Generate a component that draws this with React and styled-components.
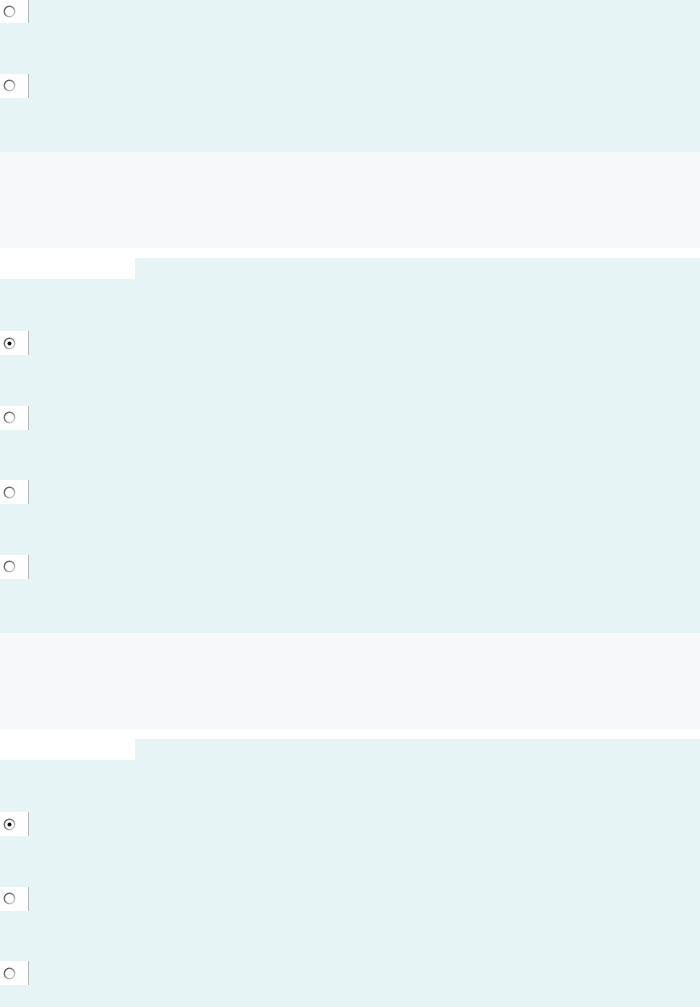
import React from 'react';
import styled, { createGlobalStyle } from 'styled-components';

const GlobalStyle = createGlobalStyle`
  html, body {
    margin: 0;
    padding: 0;
    background: #e6f4f5;
    font-family: "Liberation Sans", Arial, sans-serif;
    overflow: hidden;
  }
`;

// the screenshot is scrolled: the first row is partly above the top edge
const Page = styled.div`
  width: 700px;
  margin-top: -26px;
`;

const Section = styled.section`
  display: flex;
  flex-direction: column;
`;

const HeaderPanel = styled.div`
  height: 96px;
  background: #f7f8fa;
`;

const Spacer = styled.div`
  height: 9.5px;
  background: #ffffff;
`;

const TabBar = styled.div`
  display: flex;
  height: 21.5px;
  background: #e6f4f5;
`;

const Tab = styled.div`
  width: 135px;
  background: #ffffff;
`;

const Body = styled.div`
  display: flex;
  flex-direction: column;
  padding: ${p => (p.$first ? '0' : '27px')} 0 29px;
  background: #e6f4f5;
`;

const Row = styled.div`
  display: flex;
  align-items: center;
  height: 74.5px;
`;

const RadioBox = styled.label`
  display: flex;
  align-items: center;
  width: 25px;
  height: 24px;
  padding-left: 3px;
  background: #ffffff;
  border-right: 1px solid #b4b8b9;
`;

const Radio = ({ checked }) => (
  <svg width="13" height="13" viewBox="0 0 13 13">
    <defs>
      <linearGradient id="ring" x1="0" y1="0" x2="1" y2="1">
        <stop offset="0" stopColor="#4e4e4e" />
        <stop offset="0.5" stopColor="#8a8a8a" />
        <stop offset="1" stopColor="#e4e4e4" />
      </linearGradient>
    </defs>
    <circle cx="6.5" cy="6.5" r="5.2" fill="#ffffff" stroke="url(#ring)" strokeWidth="1.5" />
    {checked && <circle cx="6.5" cy="6.5" r="2" fill="#111111" />}
  </svg>
);

const sections = [
  { header: false, rows: [false, false] },
  { header: true, rows: [true, false, false, false] },
  { header: true, rows: [true, false, false, false] },
];

const App = () => (
  <>
    <GlobalStyle />
    <Page>
      {sections.map((s, i) => (
        <Section key={i}>
          {s.header && (
            <>
              <HeaderPanel />
              <Spacer />
              <TabBar>
                <Tab />
              </TabBar>
            </>
          )}
          <Body $first={i === 0}>
            {s.rows.map((checked, j) => (
              <Row key={j}>
                <RadioBox>
                  <Radio checked={checked} />
                </RadioBox>
              </Row>
            ))}
          </Body>
        </Section>
      ))}
    </Page>
  </>
);

export default App;
